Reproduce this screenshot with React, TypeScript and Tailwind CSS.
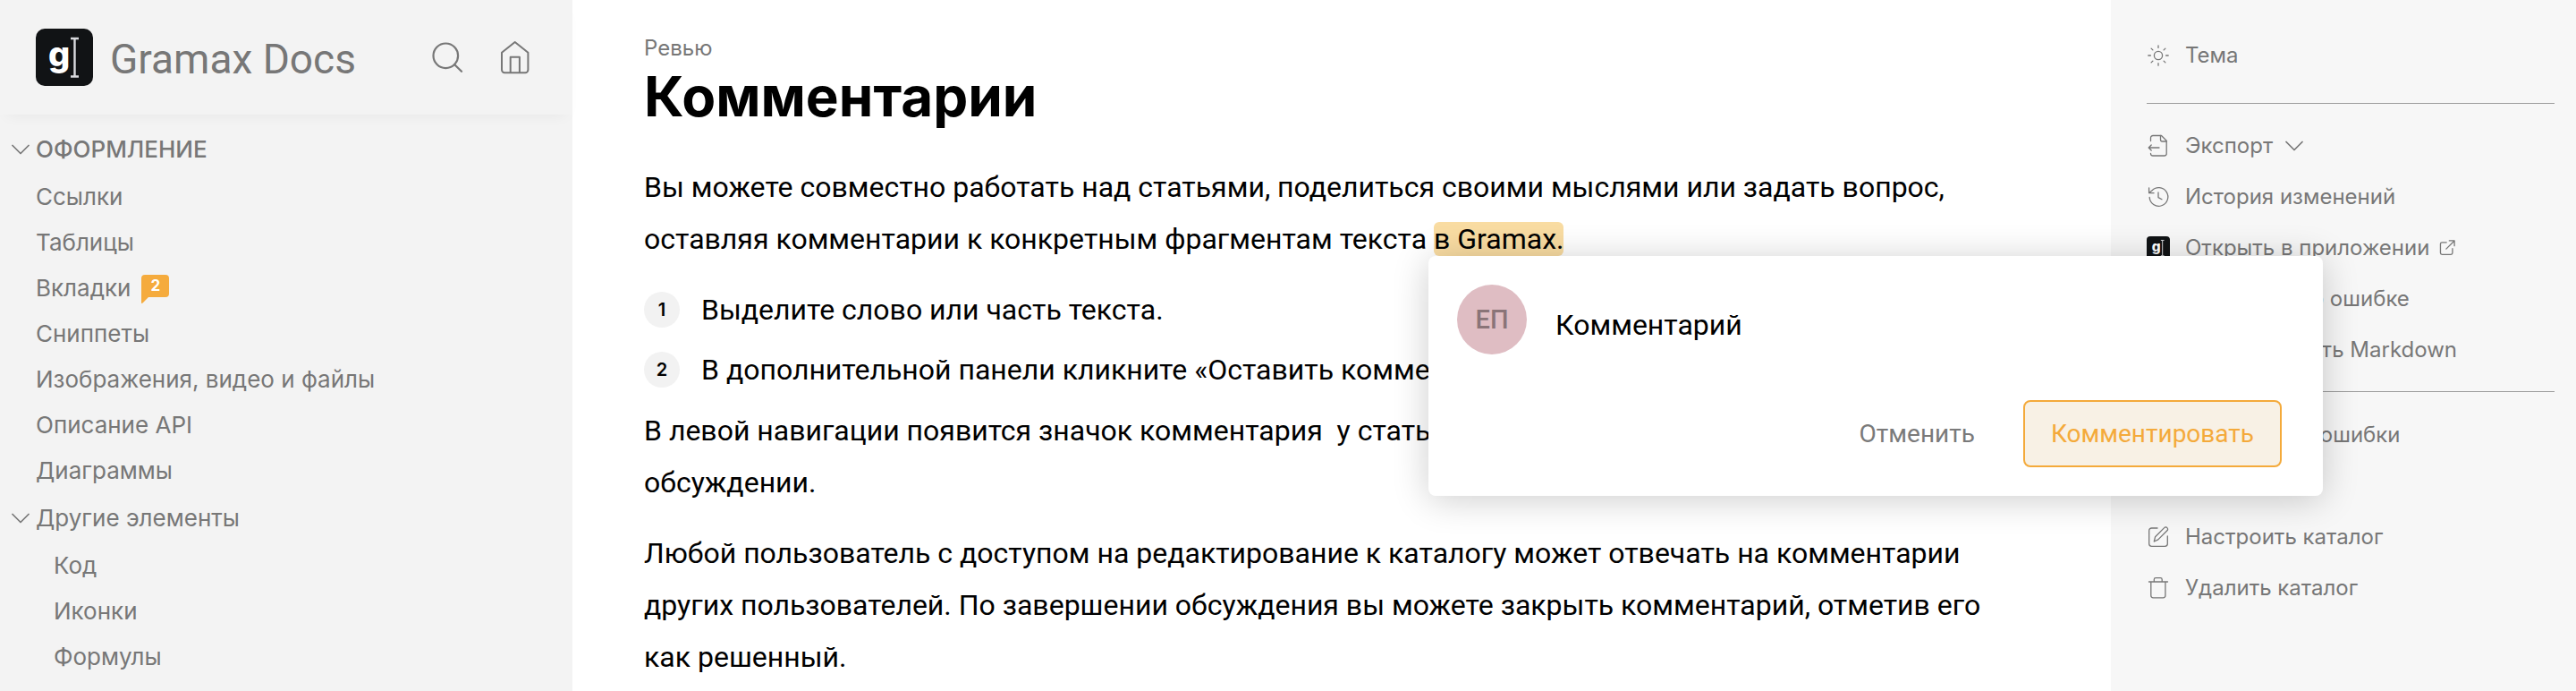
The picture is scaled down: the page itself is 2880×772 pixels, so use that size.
import React from "react";

type IconProps = { className?: string; children?: React.ReactNode };

function LineIcon({ className = "size-[26px]", children }: IconProps) {
  return (
    <svg viewBox="0 0 26 26" className={`shrink-0 ${className}`} fill="none" stroke="currentColor" strokeWidth="1.3" strokeLinecap="round" strokeLinejoin="round" aria-hidden="true">
      {children}
    </svg>
  );
}

function Logo({ className }: { className: string }) {
  return (
    <svg viewBox="0 0 64 64" className={`shrink-0 ${className}`} aria-hidden="true">
      <rect width="64" height="64" rx="10" fill="#111315" />
      <text x="14" y="42" fill="#fff" fontFamily="Inter, sans-serif" fontWeight="800" fontSize="38">g</text>
      <path d="M39 11h9M43.5 11v42.500M39 53.500h9" stroke="#d9dade" strokeWidth="2.400" fill="none" />
    </svg>
  );
}

function SearchIcon() {
  return (
    <svg viewBox="0 0 36 38" className="h-[38px] w-9" fill="none" stroke="currentColor" strokeWidth="2.200" strokeLinecap="round" aria-hidden="true">
      <circle cx="16.300" cy="17.300" r="13.800" />
      <path d="M26.300 27.200l7.700 7.600" />
    </svg>
  );
}

function HomeIcon() {
  return (
    <svg viewBox="0 0 36 38" className="h-[38px] w-9" fill="none" stroke="currentColor" strokeWidth="2" strokeLinejoin="round" aria-hidden="true">
      <path d="M17.700 2L3 13.700V33a3.200 3.200 0 0 0 3.200 3.200h23a3.200 3.200 0 0 0 3.200-3.200V13.700z" />
      <path d="M12.700 36V18.700h10.200V36" />
    </svg>
  );
}

function Chevron() {
  return (
    <svg viewBox="0 0 20 12" className="h-3 w-5 shrink-0" fill="none" stroke="currentColor" strokeWidth="1.700" strokeLinecap="round" strokeLinejoin="round" aria-hidden="true">
      <path d="M1 1.500l9 9 9-9" />
    </svg>
  );
}

const SunIcon = () => (
  <LineIcon>
    <circle cx="13" cy="13" r="4.600" />
    <path d="M13 1.800v2.600M13 21.600v2.600M1.800 13h2.600M21.600 13h2.600M5.100 5.100l1.800 1.800M19.100 19.100l1.800 1.800M5.100 20.900l1.800-1.800M19.100 6.900l1.800-1.800" />
  </LineIcon>
);

const ExportIcon = () => (
  <LineIcon>
    <path d="M4.500 7.500V4a2.500 2.500 0 0 1 2.500-2.500h9.500l5.700 5.700V21.500a2.500 2.500 0 0 1-2.500 2.500H7a2.500 2.500 0 0 1-2.500-2.500" />
    <path d="M15.500 1.500V6a2 2 0 0 0 2 2h4.700M14 15H2.200M5.200 12l-3 3 3 3" />
  </LineIcon>
);

const HistoryIcon = () => (
  <LineIcon>
    <path d="M3.200 13.500a10.300 10.300 0 1 0 2.600-7.400L3 8.300M2.600 3v5.700H8M13 8v5.600l4 2.200" />
  </LineIcon>
);

const AlertIcon = () => (
  <LineIcon>
    <path d="M13 3l11 20H2zM13 10v6M13 19v1" />
  </LineIcon>
);

const CodeIcon = () => (
  <LineIcon>
    <path d="M8 7l-6 6 6 6M18 7l6 6-6 6" />
  </LineIcon>
);

const EditIcon = () => (
  <LineIcon>
    <path d="M12 3H5.500A2.800 2.800 0 0 0 2.700 5.800v14.700a2.800 2.800 0 0 0 2.800 2.800h15a2.800 2.800 0 0 0 2.800-2.800V12" />
    <path d="M8.300 18l1.300-5.300L19.700 2.600a2.200 2.200 0 0 1 3.200 0 2.200 2.200 0 0 1 0 3.200L12.800 15.900z" />
  </LineIcon>
);

const TrashIcon = () => (
  <LineIcon>
    <path d="M2.500 6h21M8.300 6V3.500A1.800 1.800 0 0 1 10.100 1.700h5.300a1.800 1.800 0 0 1 1.800 1.800V6M4.800 6v15.300a2.500 2.500 0 0 0 2.500 2.500h11.100a2.500 2.500 0 0 0 2.500-2.500V6" />
  </LineIcon>
);

const ExternalIcon = () => (
  <LineIcon className="size-5">
    <path strokeWidth="1.700" d="M12 5H5.500A2.300 2.300 0 0 0 3.200 7.300v12.900a2.300 2.300 0 0 0 2.300 2.300h12.900a2.300 2.300 0 0 0 2.300-2.300V14M16 2.500h7.500V10M23.500 2.500L11.500 14.500" />
  </LineIcon>
);

function CommentBadge({ count }: { count: number }) {
  return (
    <span className="relative mb-1 flex h-[25px] w-[31px] items-center justify-center rounded rounded-bl-none bg-[#f5ab3d] text-[17px] leading-none font-bold text-white">
      {count}
      <svg viewBox="0 0 8 8" className="absolute top-full left-0 size-2 text-[#f5ab3d]" fill="currentColor" aria-hidden="true">
        <path d="M0 0h8L1.800 6.300Q0 8 0 6z" />
      </svg>
    </span>
  );
}

function NavLink({ children }: { children: React.ReactNode }) {
  return (
    <li>
      <a href="#" className="flex h-[51px] items-center gap-3">{children}</a>
    </li>
  );
}

function NavGroup({ title, bold, children }: { title: string; bold?: boolean; children: React.ReactNode }) {
  return (
    <li className="mt-0.5">
      <button type="button" aria-expanded="true" className={`-ml-[27px] flex h-[51px] items-center gap-[7px] ${bold ? "font-medium" : ""}`}>
        <Chevron />
        {title}
      </button>
      <ul className={bold ? "mt-0.5" : "mt-0.5 pl-5"}>{children}</ul>
    </li>
  );
}

function Action({ icon, children, after }: { icon: React.ReactNode; children: React.ReactNode; after?: React.ReactNode }) {
  return (
    <li>
      <button type="button" className="flex h-[57px] items-center gap-[17px] whitespace-nowrap">
        {icon}
        <span className="flex items-center gap-2.5">
          {children}
          {after}
        </span>
      </button>
    </li>
  );
}

function CommentPopup() {
  return (
    <form className="absolute top-full -left-1.5 z-10 flex w-[1000px] flex-col rounded-lg bg-white pt-8 pr-[46px] pb-8 pl-8 shadow-[0_4px_40px_rgba(0,0,0,0.2)]">
      <div className="flex gap-8">
        <div className="flex size-[78px] shrink-0 items-center justify-center rounded-full bg-[#dfbdc3] text-[29px] leading-none font-medium text-[#8a7478]">ЕП</div>
        <input aria-label="Комментарий" defaultValue="Комментарий" className="mt-4 h-[58px] min-w-0 flex-1 bg-transparent outline-none" />
      </div>
      <div className="mt-[51px] flex justify-end gap-6 text-[28px] leading-none">
        <button type="button" className="h-[75px] px-[30px] text-[#7a7a7a]">Отменить</button>
        <button type="button" className="h-[75px] rounded-lg border-2 border-[#f4aa3b] bg-[#f8f1e5] px-[29px] text-[#f4aa3b]">Комментировать</button>
      </div>
    </form>
  );
}

function Step({ n, children }: { n: number; children: React.ReactNode }) {
  return (
    <li className="flex items-center gap-6">
      <span className="flex size-10 shrink-0 items-center justify-center rounded-full bg-[#f2f2f2] font-[Inter,sans-serif] text-[20px] leading-none font-semibold">{n}</span>
      <span>{children}</span>
    </li>
  );
}

export default function App() {
  return (
    <div className="flex min-h-screen bg-white font-[Inter,sans-serif] text-black">
      <aside className="w-[640px] shrink-0 bg-[#f3f3f3] text-[26px] leading-none text-[#777]">
        <header className="flex h-32 items-center pr-[46px] pl-10 shadow-[0_8px_16px_-8px_rgba(0,0,0,0.06)]">
          <Logo className="size-16" />
          <a href="#" className="mt-1 ml-[19px] flex-1 font-[Roboto,sans-serif] text-[46px]">Gramax Docs</a>
          <div className="flex gap-10">
            <button type="button" aria-label="Поиск"><SearchIcon /></button>
            <button type="button" aria-label="На главную"><HomeIcon /></button>
          </div>
        </header>
        <nav aria-label="Навигация">
          <ul className="pt-[11px] pl-10">
            <NavGroup title="ОФОРМЛЕНИЕ" bold>
              <NavLink>Ссылки</NavLink>
              <NavLink>Таблицы</NavLink>
              <NavLink>Вкладки <CommentBadge count={2} /></NavLink>
              <NavLink>Сниппеты</NavLink>
              <NavLink>Изображения, видео и файлы</NavLink>
              <NavLink>Описание API</NavLink>
              <NavLink>Диаграммы</NavLink>
            </NavGroup>
            <NavGroup title="Другие элементы">
              <NavLink>Код</NavLink>
              <NavLink>Иконки</NavLink>
              <NavLink>Формулы</NavLink>
            </NavGroup>
          </ul>
        </nav>
      </aside>

      <main className="min-w-0 flex-1 pt-10 pr-[120px] pl-20">
        <div className="text-2xl leading-7 text-[#777]">Ревью</div>
        <h1 className="mt-0.5 text-[62px] leading-[76px] font-bold">Комментарии</h1>
        <div className="mt-[34px] font-[Roboto,sans-serif] text-[32px] leading-[58px]">
          <div>
            Вы можете совместно работать над статьями, поделиться своими мыслями или задать вопрос, оставляя комментарии к конкретным фрагментам текста{" "}
            <span className="relative rounded-md bg-[#f9dca2]">
              в Gramax.
              <CommentPopup />
            </span>
          </div>
          <ol className="mt-[21px] flex flex-col gap-[9px]">
            <Step n={1}>Выделите слово или часть текста.</Step>
            <Step n={2}>В дополнительной панели кликните «Оставить комментарий».</Step>
          </ol>
          <p className="mt-2.5">
            В левой навигации появится значок комментария&nbsp; у статьи с количеством комментариев в обсуждении.
          </p>
          <p className="mt-[21px]">
            Любой пользователь с доступом на редактирование к каталогу может отвечать на комментарии других пользователей. По завершении обсуждения вы можете закрыть комментарий, отметив его как решенный.
          </p>
        </div>
      </main>

      <aside className="w-[520px] shrink-0 bg-[#f7f7f7] pt-[33px] pr-6 pl-10 text-2xl leading-none text-[#777]">
        <ul>
          <Action icon={<SunIcon />}>Тема</Action>
        </ul>
        <hr className="mt-[25px] mb-[18px] border-[#9c9c9c]" />
        <ul>
          <Action icon={<ExportIcon />} after={<span className="pl-1"><Chevron /></span>}>Экспорт</Action>
          <Action icon={<HistoryIcon />}>История изменений</Action>
          <Action icon={<Logo className="size-[26px]" />} after={<ExternalIcon />}>Открыть в приложении</Action>
          <Action icon={<AlertIcon />}>Сообщить об ошибке</Action>
          <Action icon={<CodeIcon />}>Редактировать Markdown</Action>
        </ul>
        <hr className="mt-[18px] mb-[19px] border-[#9c9c9c]" />
        <ul>
          <Action icon={<AlertIcon />}>Посмотреть ошибки</Action>
          <Action icon={<CodeIcon />}>Облако</Action>
          <Action icon={<EditIcon />}>Настроить каталог</Action>
          <Action icon={<TrashIcon />}>Удалить каталог</Action>
        </ul>
      </aside>
    </div>
  );
}
